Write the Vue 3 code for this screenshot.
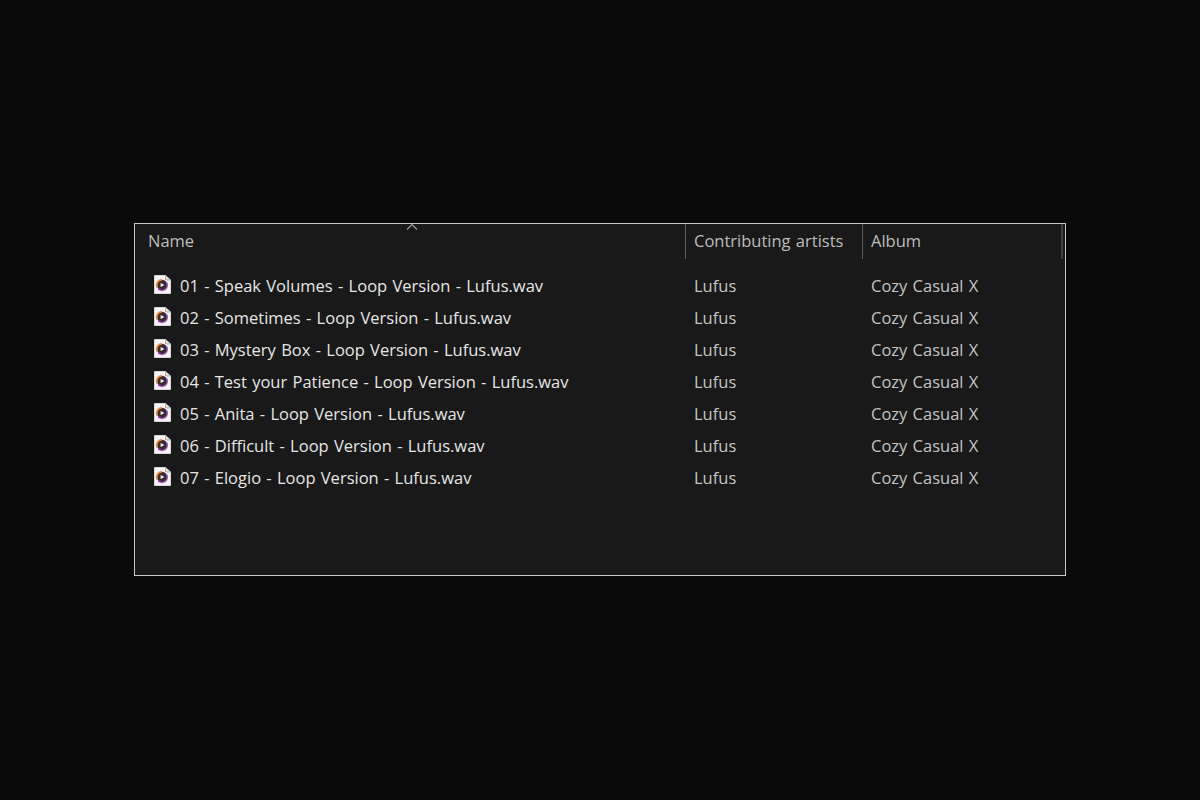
<script setup>
const artist = 'Lufus'
const album = 'Cozy Casual X'
const files = [
  '01 - Speak Volumes - Loop Version - Lufus.wav',
  '02 - Sometimes - Loop Version - Lufus.wav',
  '03 - Mystery Box - Loop Version - Lufus.wav',
  '04 - Test your Patience - Loop Version - Lufus.wav',
  '05 - Anita - Loop Version - Lufus.wav',
  '06 - Difficult - Loop Version - Lufus.wav',
  '07 - Elogio - Loop Version - Lufus.wav'
]
</script>

<template>
  <div class="page">
    <div class="window">
      <svg class="sort" width="12" height="6" viewBox="0 0 12 6">
        <path d="M1 5.5 L6 .5 L11 5.5" fill="none" stroke="#a0a0a0" stroke-width="1.1" />
      </svg>
      <div class="head">
        <div class="col col-name">Name</div>
        <div class="col col-artist">Contributing artists</div>
        <div class="col col-album">Album</div>
      </div>
      <div class="list">
        <div v-for="file in files" :key="file" class="row">
          <div class="cell-name">
            <svg class="icon" width="17" height="19" viewBox="0 0 17 19">
              <path d="M.5.5 H11.5 L16.5 5 V18.5 H.5 Z" fill="#f6f4f4" stroke="#d6d6d6" />
              <path d="M11.5.5 V5 H16.5" fill="#dcdcdc" stroke="#b0b0b0" />
              <circle cx="8" cy="10" r="5.2" fill="#3a2a32" />
              <path d="M3.4 12.4 A5.2 5.2 0 0 1 8 4.8" fill="none" stroke="#ea7c34" stroke-width="1.8" />
              <path d="M12.6 7.6 A5.2 5.2 0 0 1 4.2 13.6" fill="none" stroke="#9a4cb0" stroke-width="1.6" />
              <path d="M6.6 7.9 L10.4 10 L6.6 12.1 Z" fill="#f4f4f4" />
            </svg>
            <span class="name">{{ file }}</span>
          </div>
          <div class="cell-artist">{{ artist }}</div>
          <div class="cell-album">{{ album }}</div>
        </div>
      </div>
    </div>
  </div>
</template>

<style>
html, body {
  margin: 0;
  background: #0a0a0a;
}
</style>

<style scoped>
.page {
  height: 799px;
  display: flex;
  align-items: center;
  justify-content: center;
  font-family: "Open Sans", "Noto Sans", sans-serif;
  font-size: 16.5px;
  word-spacing: 1px;
}

.window {
  position: relative;
  width: 930px;
  height: 351px;
  background: #191919;
  border: 1px solid #c8c8c8;
}

.sort {
  position: absolute;
  left: 271px;
  top: 0;
}

.head {
  display: flex;
  height: 35px;
  color: #bdbdbd;
  line-height: 34px;
}

.col {
  box-sizing: border-box;
  border-right: 1px solid #5e5e5e;
}

.col-name {
  width: 551px;
  padding-left: 13px;
}

.col-artist {
  width: 177px;
  padding-left: 8px;
}

.col-album {
  width: 200px;
  padding-left: 8px;
  border-right: 2px solid #404040;
}

.list {
  padding-top: 11px;
}

.row {
  display: flex;
  height: 32px;
  line-height: 32px;
  color: #c4c4c4;
}

.cell-name {
  width: 551px;
  display: flex;
  align-items: center;
  padding-left: 19px;
  box-sizing: border-box;
}

.icon {
  margin-top: -3px;
  margin-right: 9px;
  flex: none;
}

.name {
  color: #e6e6e6;
}

.cell-artist {
  width: 177px;
  padding-left: 8px;
  box-sizing: border-box;
}

.cell-album {
  padding-left: 8px;
}
</style>
